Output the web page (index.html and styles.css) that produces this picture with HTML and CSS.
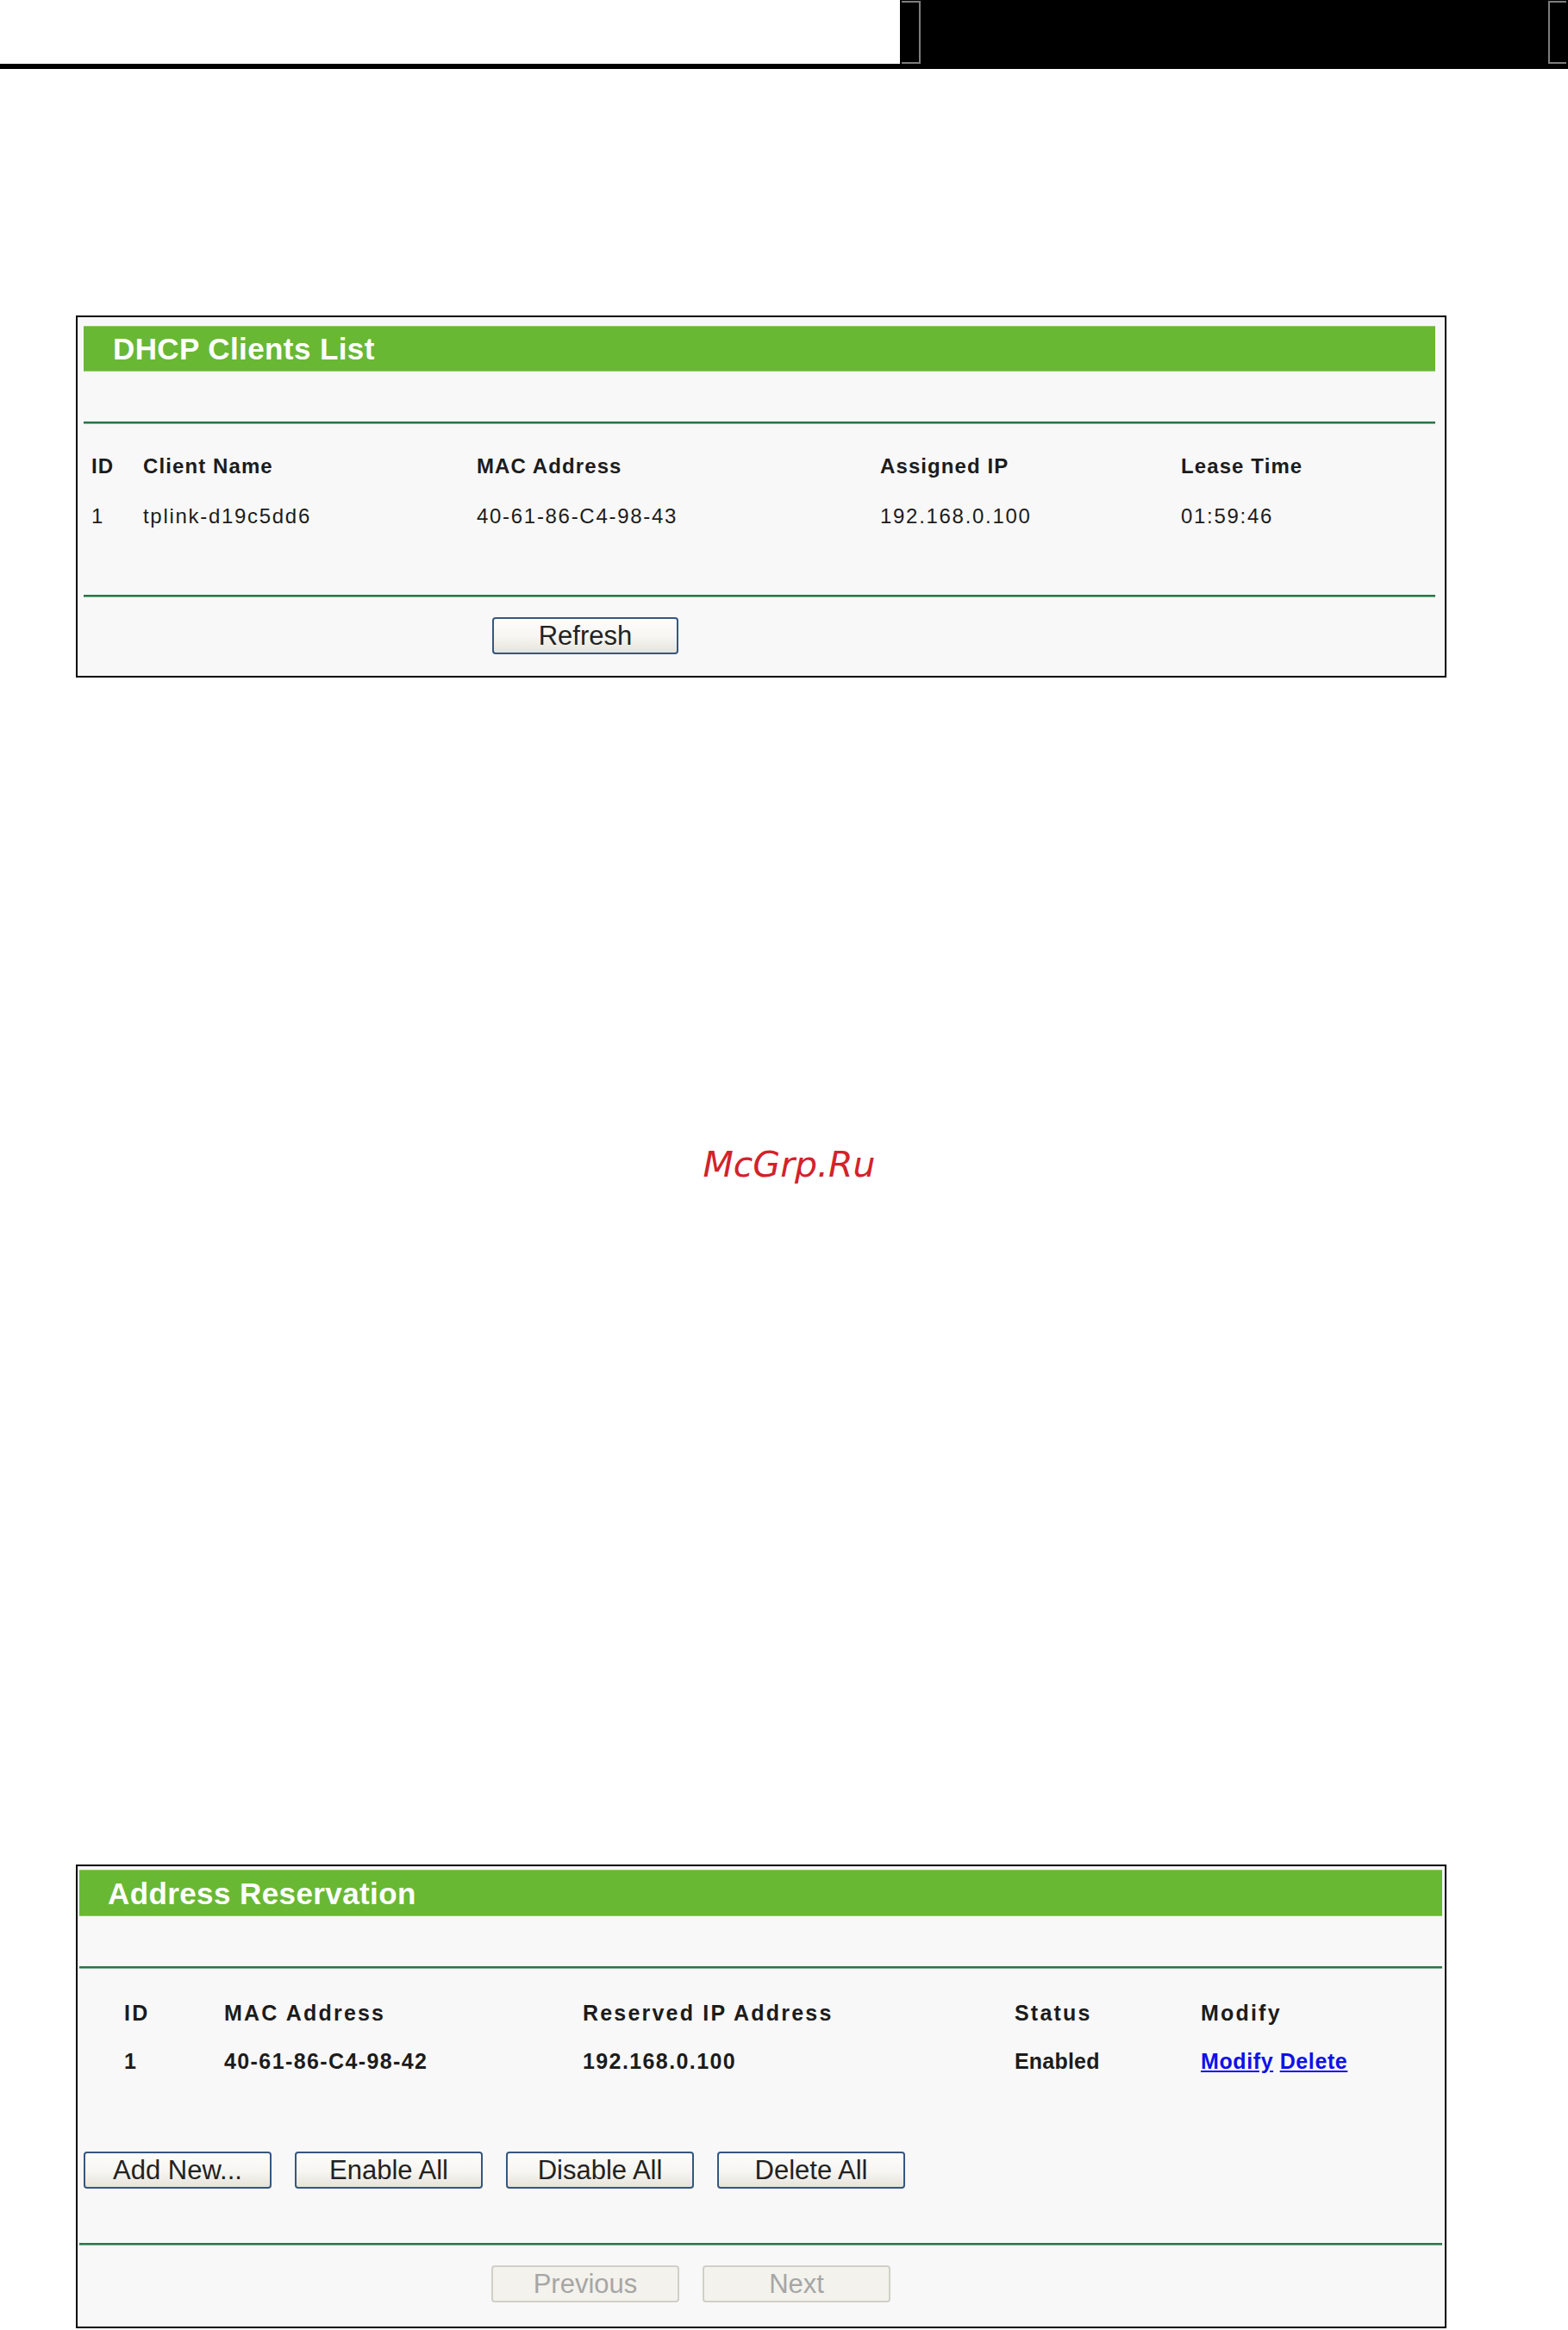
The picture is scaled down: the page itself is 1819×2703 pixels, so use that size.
FILE: index.html
```html
<!DOCTYPE html>
<html lang="en">
<head>
<meta charset="utf-8">
<title>DHCP Clients List / Address Reservation</title>
<link rel="stylesheet" href="styles.css">
</head>
<body>
<header class="topbar">
  <div class="topbar-left"></div>
  <div class="topbar-right">
    <span class="bracket bracket-l"></span>
    <span class="bracket bracket-r"></span>
  </div>
</header>
<div class="topline"></div>

<section class="panel panel-clients">
  <div class="panel-title">DHCP Clients List</div>
  <div class="panel-spacer"></div>
  <div class="rule"></div>
  <div class="grid grid-clients">
    <div class="row head">
      <span>ID</span><span>Client Name</span><span>MAC Address</span><span>Assigned IP</span><span>Lease Time</span>
    </div>
    <div class="row data">
      <span>1</span><span>tplink-d19c5dd6</span><span>40-61-86-C4-98-43</span><span>192.168.0.100</span><span>01:59:46</span>
    </div>
  </div>
  <div class="rule rule-low-clients"></div>
  <div class="btn-row btn-row-refresh">
    <button class="btn btn-refresh" type="button">Refresh</button>
  </div>
</section>

<div class="watermark">McGrp.Ru</div>

<section class="panel panel-reserve">
  <div class="panel-title">Address Reservation</div>
  <div class="panel-spacer"></div>
  <div class="rule"></div>
  <div class="grid grid-reserve">
    <div class="row head">
      <span>ID</span><span>MAC Address</span><span>Reserved IP Address</span><span>Status</span><span>Modify</span>
    </div>
    <div class="row data">
      <span>1</span><span>40-61-86-C4-98-42</span><span>192.168.0.100</span><span class="status">Enabled</span><span class="links"><a href="#">Modify</a> <a href="#">Delete</a></span>
    </div>
  </div>
  <div class="btn-row btn-row-actions">
    <button class="btn" type="button">Add New...</button>
    <button class="btn" type="button">Enable All</button>
    <button class="btn" type="button">Disable All</button>
    <button class="btn" type="button">Delete All</button>
  </div>
  <div class="rule rule-low-reserve"></div>
  <div class="btn-row btn-row-pager">
    <button class="btn btn-disabled" type="button" disabled>Previous</button>
    <button class="btn btn-disabled" type="button" disabled>Next</button>
  </div>
</section>
</body>
</html>
```

FILE: styles.css
```css
* { box-sizing: border-box; }

html, body {
  margin: 0;
  padding: 0;
  background: #ffffff;
}

body {
  width: 1819px;
  font-family: "Liberation Sans", Arial, sans-serif;
  color: #1c1c1c;
}

/* ---------- top bar ---------- */
.topbar {
  display: flex;
  height: 74px;
}
.topbar-left {
  flex: 0 0 1044px;
  background: #ffffff;
}
.topbar-right {
  flex: 1;
  background: #000000;
  display: flex;
  justify-content: space-between;
  padding: 1px 2px 0 2px;
}
.bracket {
  display: block;
  height: 73px;
  border: 2px solid #7d7d7d;
}
.bracket-l {
  width: 22px;
  border-left: none;
}
.bracket-r {
  width: 21px;
  border-right: none;
}
.topline {
  height: 6px;
  background: #000000;
}

/* ---------- panels ---------- */
.panel {
  width: 1590px;
  margin-left: 88px;
  border: 2px solid #000000;
  background: #f8f8f8;
}
.panel-clients {
  margin-top: 286px;
  padding: 10px 11px 25px 7px;
}
.panel-reserve {
  margin-top: 792px;
  padding: 4px 3px 28px 2px;
}

.panel-title {
  display: flex;
  align-items: center;
  background: #69b834;
  border-top: 1px solid #8fcc66;
  border-bottom: 1px solid #8fcc66;
  color: #ffffff;
  font-weight: bold;
  font-size: 35px;
  line-height: 35px;
  letter-spacing: 0.4px;
}
.panel-clients .panel-title {
  height: 53px;
  padding-left: 34px;
}
.panel-reserve .panel-title {
  height: 54px;
  padding-left: 33px;
}

.panel-spacer {
  height: 58px;
}

.rule {
  height: 3px;
  background: linear-gradient(#2c7448 0, #2c7448 2px, #7fb394 2px, #7fb394 3px);
}

/* ---------- tables ---------- */
.grid .row {
  display: grid;
  height: 30px;
  line-height: 30px;
  white-space: nowrap;
}
.grid-clients {
  margin-top: 34px;
  padding-left: 9px;
}
.grid-clients .row {
  grid-template-columns: 60px 387px 468px 349px 1fr;
  font-size: 24px;
}
.grid-clients .row + .row {
  margin-top: 28px;
}
.grid-clients .head {
  font-weight: bold;
  letter-spacing: 1.1px;
}
.grid-clients .data {
  font-weight: normal;
  letter-spacing: 1.7px;
}

.grid-reserve {
  margin-top: 36px;
  padding-left: 52px;
}
.grid-reserve .row {
  grid-template-columns: 116px 416px 501px 216px 1fr;
  font-size: 25px;
  font-weight: bold;
}
.grid-reserve .row + .row {
  margin-top: 26px;
}
.grid-reserve .head {
  letter-spacing: 2.2px;
}
.grid-reserve .data {
  letter-spacing: 1.4px;
}
.grid-reserve .status {
  letter-spacing: 0.2px;
}
.links {
  letter-spacing: 0.6px;
}
.links a {
  color: #1010e8;
  text-decoration: underline;
}

/* ---------- buttons ---------- */
.btn-row {
  display: flex;
  gap: 27px;
}
.btn-row-refresh {
  margin-top: 23px;
  padding-left: 474px;
}
.btn-row-actions {
  margin-top: 90px;
  padding-left: 5px;
}
.rule-low-clients {
  margin-top: 76px;
}
.rule-low-reserve {
  margin-top: 63px;
}
.btn-row-pager {
  margin-top: 23px;
  padding-left: 478px;
}

.btn {
  width: 218px;
  height: 43px;
  padding: 0;
  margin: 0;
  border: 2px solid #36577f;
  border-radius: 4px;
  background: linear-gradient(#fdfdfc 0%, #f6f5f1 55%, #e6e3da 100%);
  font-family: "Liberation Sans", Arial, sans-serif;
  font-size: 31px;
  line-height: 39px;
  color: #222222;
  text-align: center;
}
.btn-refresh {
  width: 216px;
}
.btn-disabled {
  border-color: #d0d0c8;
  background: #f3f2ec;
  color: #a6a6a6;
}

/* ---------- watermark ---------- */
.watermark {
  margin-top: 546px;
  height: 39px;
  padding-left: 12px;
  text-align: center;
  font-family: "DejaVu Sans", sans-serif;
  font-style: oblique;
  font-size: 41px;
  line-height: 39px;
  color: #d2232a;
}
```
